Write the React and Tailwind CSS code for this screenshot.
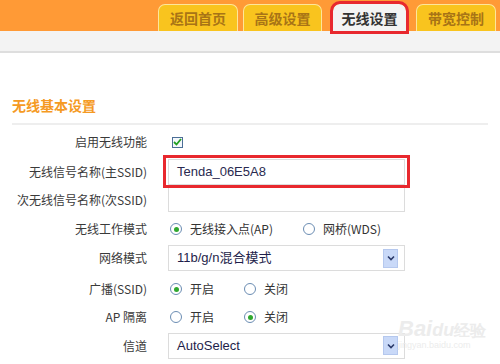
import React from 'react';

const font = { fontFamily: '"Noto Sans CJK SC", "Liberation Sans", sans-serif' };

const Tab = ({ label, active, className = '' }) => (
    <div
        className={`h-[27px] flex items-center justify-center rounded-t-[7px] border border-b-0 text-[14px] font-bold ${
            active
                ? 'bg-[#f3f3f3] border-[#f3f3f3] text-[#333] outline-[3px] outline-solid outline-[#e8282e]'
                : 'bg-[#f9c41e] border-[#fde69a] text-[#a87416]'
        } ${className}`}
    >
        {label}
    </div>
);

const Radio = ({ checked }) => (
    <span className="w-[12px] h-[12px] rounded-full border border-[#6b8db3] bg-white flex items-center justify-center shrink-0">
        {checked && <span className="w-[5px] h-[5px] rounded-full bg-[#2fa82f]" />}
    </span>
);

const Row = ({ label, className = '', children }) => (
    <div className={`flex items-center ${className}`}>
        <div className="w-[148px] text-right text-[12px] text-[#3a3a3a] pr-[1px]">{label}</div>
        <div className="ml-[20px] flex items-center">{children}</div>
    </div>
);

const Select = ({ value }) => (
    <div className="w-[237px] h-[26px] border border-[#dcdcdc] bg-white flex items-center justify-between pl-[8px] pr-[6px]">
        <span className="text-[13px] text-[#1e1e4a]" style={{ fontFamily: '"Liberation Sans", "Noto Sans CJK SC", sans-serif' }}>{value}</span>
        <span className="w-[15px] h-[19px] bg-[#c9d9f8] border border-[#b5c8ee] flex items-center justify-center">
            <svg width="8" height="6" viewBox="0 0 8 6">
                <path d="M1 1.5 L4 4.5 L7 1.5" stroke="#2a3a6a" strokeWidth="1.6" fill="none" />
            </svg>
        </span>
    </div>
);

export default function App() {
    return (
        <div className="w-[500px] h-[364px] overflow-hidden bg-white relative" style={font}>
            {/* Header tabs */}
            <div className="h-[31px] bg-[#ff9a36] flex items-end">
                <Tab label="返回首页" className="ml-[158px] w-[80px]" />
                <Tab label="高级设置" className="ml-[5px] w-[79px]" />
                <Tab label="无线设置" active className="ml-[11px] w-[73px]" />
                <Tab label="带宽控制" className="ml-[10px] w-[80px]" />
            </div>
            <div className="h-[22px] bg-[#f3f3f3] border-b-2 border-[#dedede]" />

            {/* Section heading */}
            <div className="mx-[12px] mt-[42px]">
                <div className="text-[14px] font-bold text-[#f59a23] leading-[20px]">无线基本设置</div>
                <div className="mt-[8px] h-[2px] bg-[#eeeeee]" />
            </div>

            {/* Form */}
            <div className="mt-[10px] flex flex-col">
                <Row label="启用无线功能" className="h-[14px]">
                    <span className="ml-[4px] w-[11px] h-[11px] border border-[#4b6e96] bg-[#f4f8fc] flex items-center justify-center">
                        <svg width="9" height="8" viewBox="0 0 9 8">
                            <path d="M1 4 L3.5 6.5 L8 1" stroke="#22a022" strokeWidth="1.8" fill="none" />
                        </svg>
                    </span>
                </Row>
                <Row label="无线信号名称(主SSID)" className="mt-[6px] h-[33px]">
                    <div className="-ml-[5px] w-[247px] h-[33px] border-[3px] border-[#e8282e] flex items-center px-[2px]">
                        <div className="w-full h-[26px] border border-[#dcdcdc] bg-white flex items-center pl-[8px] text-[13px] text-[#2a2a50]" style={{ fontFamily: '"Liberation Sans", sans-serif' }}>
                            Tenda_06E5A8
                        </div>
                    </div>
                </Row>
                <Row label="次无线信号名称(次SSID)" className="h-[24px]">
                    <div className="w-[237px] h-[24px] border border-[#dcdcdc] border-t-0 bg-white" />
                </Row>
                <Row label="无线工作模式" className="mt-[6px] h-[22px]">
                    <span className="ml-[2px]"><Radio checked /></span>
                    <span className="ml-[8px] text-[12px] text-[#333]">无线接入点(AP)</span>
                    <span className="ml-[30px]"><Radio /></span>
                    <span className="ml-[8px] text-[12px] text-[#333]">网桥(WDS)</span>
                </Row>
                <Row label="网络模式" className="mt-[5px] h-[26px]">
                    <Select value="11b/g/n混合模式" />
                </Row>
                <Row label="广播(SSID)" className="mt-[6px] h-[24px]">
                    <span className="ml-[2px]"><Radio checked /></span>
                    <span className="ml-[8px] text-[12px] text-[#333]">开启</span>
                    <span className="ml-[30px]"><Radio /></span>
                    <span className="ml-[8px] text-[12px] text-[#333]">关闭</span>
                </Row>
                <Row label="AP 隔离" className="mt-[4px] h-[24px]">
                    <span className="ml-[2px]"><Radio /></span>
                    <span className="ml-[8px] text-[12px] text-[#333]">开启</span>
                    <span className="ml-[30px]"><Radio checked /></span>
                    <span className="ml-[8px] text-[12px] text-[#333]">关闭</span>
                </Row>
                <Row label="信道" className="mt-[3px] h-[27px]">
                    <Select value="AutoSelect" />
                </Row>
            </div>

            {/* Watermark */}
            <div className="absolute left-[398px] top-[318px] text-[#ececec] leading-none pointer-events-none">
                <div className="text-[22px] font-bold italic" style={{ fontFamily: '"Liberation Sans", sans-serif' }}>
                    Bai<span className="text-[18px]">du</span><span className="text-[16px] not-italic">经验</span>
                </div>
                <div className="text-[9px] mt-[1px]" style={{ fontFamily: '"Liberation Sans", sans-serif' }}>jingyan.baidu.com</div>
            </div>
        </div>
    );
}
